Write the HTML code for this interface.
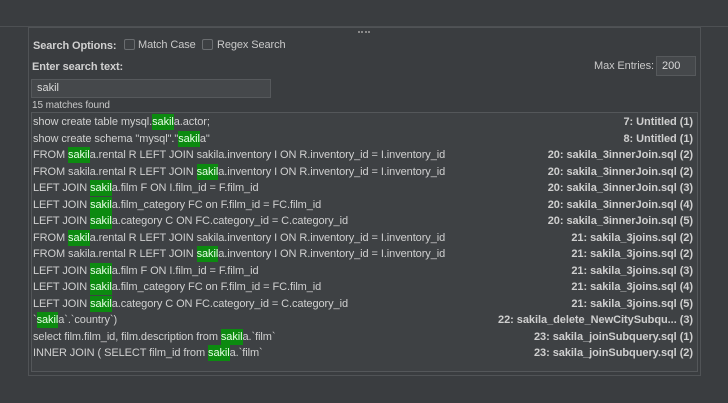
<!DOCTYPE html>
<html><head><meta charset="utf-8"><style>
*{margin:0;padding:0;box-sizing:border-box}
body{width:728px;height:403px;background:#3a3d40;font-family:"Liberation Sans",sans-serif;color:#c9c9c9;position:relative;overflow:hidden;font-size:11px}
.topline{position:absolute;left:0;top:26px;width:728px;height:1px;background:#4d5053}
.dots{position:absolute;left:358px;top:31px;width:12px;height:2px;border-top:2px dotted #8a8a8a}
.frame{position:absolute;left:28px;top:27px;width:673px;height:349px;border:1px solid #505356}
.lbl{position:absolute;font-weight:bold;font-size:11px;color:#d0d0d0;letter-spacing:-0.1px}
.cb{position:absolute;width:11px;height:11px;border:1px solid #6a6d70;border-radius:2px;background:#3d4043}
.t{position:absolute;font-size:11px;letter-spacing:-0.1px}
.inp{position:absolute;background:#45484b;border:1px solid #56595c;color:#d8d8d8;font-size:11px;padding-left:5px;line-height:17px}
.list{position:absolute;left:31px;top:112px;width:667px;height:260px;background:#3e4144;border:1px solid #54575a}
.row{position:absolute;left:1px;right:4px;height:16px;line-height:16px;font-size:11px;white-space:nowrap;color:#d0d0d0;letter-spacing:-0.08px}
.row .r{position:absolute;right:0;top:0;font-weight:bold;color:#cfcfcf;letter-spacing:-0.05px}
.h{background:#0c8a10;color:#e6ffe6;padding:2px 0}
</style></head><body>
<div class="topline"></div><div class="dots"></div>
<div class="frame"></div>
<div class="lbl" style="left:33px;top:40px">Search Options:</div>
<div class="cb" style="left:124px;top:39px"></div><div class="t" style="left:138px;top:39px">Match Case</div>
<div class="cb" style="left:202px;top:39px"></div><div class="t" style="left:217px;top:39px">Regex Search</div>
<div class="lbl" style="left:32px;top:61px">Enter search text:</div>
<div class="t" style="left:594px;top:60px">Max Entries:</div>
<div class="inp" style="left:656px;top:56px;width:40px;height:20px;line-height:18px">200</div>
<div class="inp" style="left:31px;top:79px;width:240px;height:19px">sakil</div>
<div class="t" style="left:32px;top:100px;font-size:10px">15 matches found</div>
<div class="list">
<div class="row" style="top:1px">show create table mysql.<span class="h">sakil</span>a.actor;<span class="r">7: Untitled (1)</span></div>
<div class="row" style="top:17.5px">show create schema "mysql"."<span class="h">sakil</span>a"<span class="r">8: Untitled (1)</span></div>
<div class="row" style="top:34px">FROM <span class="h">sakil</span>a.rental R LEFT JOIN sakila.inventory I ON R.inventory_id = I.inventory_id<span class="r">20: sakila_3innerJoin.sql (2)</span></div>
<div class="row" style="top:50.5px">FROM sakila.rental R LEFT JOIN <span class="h">sakil</span>a.inventory I ON R.inventory_id = I.inventory_id<span class="r">20: sakila_3innerJoin.sql (2)</span></div>
<div class="row" style="top:67px">LEFT JOIN <span class="h">sakil</span>a.film F ON I.film_id = F.film_id<span class="r">20: sakila_3innerJoin.sql (3)</span></div>
<div class="row" style="top:83.5px">LEFT JOIN <span class="h">sakil</span>a.film_category FC on F.film_id = FC.film_id<span class="r">20: sakila_3innerJoin.sql (4)</span></div>
<div class="row" style="top:100px">LEFT JOIN <span class="h">sakil</span>a.category C ON FC.category_id = C.category_id<span class="r">20: sakila_3innerJoin.sql (5)</span></div>
<div class="row" style="top:116.5px">FROM <span class="h">sakil</span>a.rental R LEFT JOIN sakila.inventory I ON R.inventory_id = I.inventory_id<span class="r">21: sakila_3joins.sql (2)</span></div>
<div class="row" style="top:133px">FROM sakila.rental R LEFT JOIN <span class="h">sakil</span>a.inventory I ON R.inventory_id = I.inventory_id<span class="r">21: sakila_3joins.sql (2)</span></div>
<div class="row" style="top:149.5px">LEFT JOIN <span class="h">sakil</span>a.film F ON I.film_id = F.film_id<span class="r">21: sakila_3joins.sql (3)</span></div>
<div class="row" style="top:166px">LEFT JOIN <span class="h">sakil</span>a.film_category FC on F.film_id = FC.film_id<span class="r">21: sakila_3joins.sql (4)</span></div>
<div class="row" style="top:182.5px">LEFT JOIN <span class="h">sakil</span>a.category C ON FC.category_id = C.category_id<span class="r">21: sakila_3joins.sql (5)</span></div>
<div class="row" style="top:199px">`<span class="h">sakil</span>a`.`country`)<span class="r">22: sakila_delete_NewCitySubqu... (3)</span></div>
<div class="row" style="top:215.5px">select film.film_id, film.description from <span class="h">sakil</span>a.`film`<span class="r">23: sakila_joinSubquery.sql (1)</span></div>
<div class="row" style="top:232px">INNER JOIN ( SELECT film_id from <span class="h">sakil</span>a.`film`<span class="r">23: sakila_joinSubquery.sql (2)</span></div>
</div>
</body></html>
